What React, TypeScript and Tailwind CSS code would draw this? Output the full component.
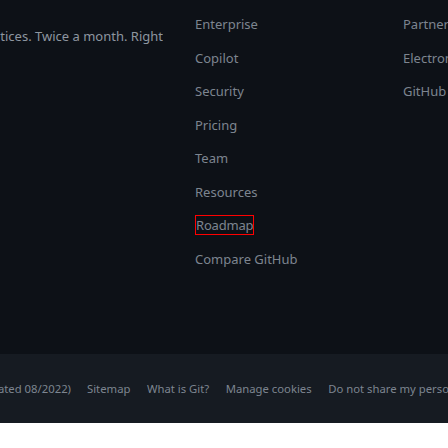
const productLinks = [
  'Enterprise',
  'Copilot',
  'Security',
  'Pricing',
  'Team',
  'Resources',
  'Roadmap',
  'Compare GitHub',
];

const platformLinks = ['Partners', 'Electron', 'GitHub Education'];

const legalLinks = ['Sitemap', 'What is Git?', 'Manage cookies', 'Do not share my personal information'];

export default function App() {
  return (
    <div className="w-[448px] h-[448px] overflow-hidden bg-white font-['Noto_Sans',sans-serif]">
      <div className="h-[354px] bg-[#0d1117] flex">
        <div className="w-[163px] shrink-0 overflow-hidden flex justify-end pt-[26px]">
          <p className="whitespace-nowrap text-[13px] leading-5 text-[#8d96a0]">
            Subscribe to our developer newsletter for tips, technical guides and best practices. Twice a month. Right
          </p>
        </div>

        <ul className="ml-[32px] w-[208px] shrink-0 flex flex-col gap-[13.5px] pt-[14px]">
          {productLinks.map((link) => (
            <li key={link} className="h-5 text-[13px] leading-5 text-[#7d8590] whitespace-nowrap">
              {link === 'Roadmap' ? (
                <span className="inline-block h-5 border border-[#ff0000] leading-[18px] tracking-[-0.2px]">{link}</span>
              ) : (
                link
              )}
            </li>
          ))}
        </ul>

        <ul className="flex flex-col gap-[13.5px] pt-[14px] min-w-0 overflow-hidden">
          {platformLinks.map((link) => (
            <li key={link} className="text-[13px] leading-5 text-[#7d8590] whitespace-nowrap">
              {link}
            </li>
          ))}
        </ul>
      </div>

      <div className="h-[69px] bg-[#161b22] flex items-center overflow-hidden">
        <div className="w-[71px] shrink-0 overflow-hidden flex justify-end">
          <span className="whitespace-nowrap text-[11.3px] leading-5 text-[#7d8590]">Privacy (Updated 08/2022)</span>
        </div>
        <ul className="flex gap-[16.5px] ml-[16px] shrink-0">
          {legalLinks.map((link) => (
            <li key={link} className="whitespace-nowrap text-[11.3px] leading-5 text-[#7d8590]">
              {link}
            </li>
          ))}
        </ul>
      </div>
    </div>
  );
}
